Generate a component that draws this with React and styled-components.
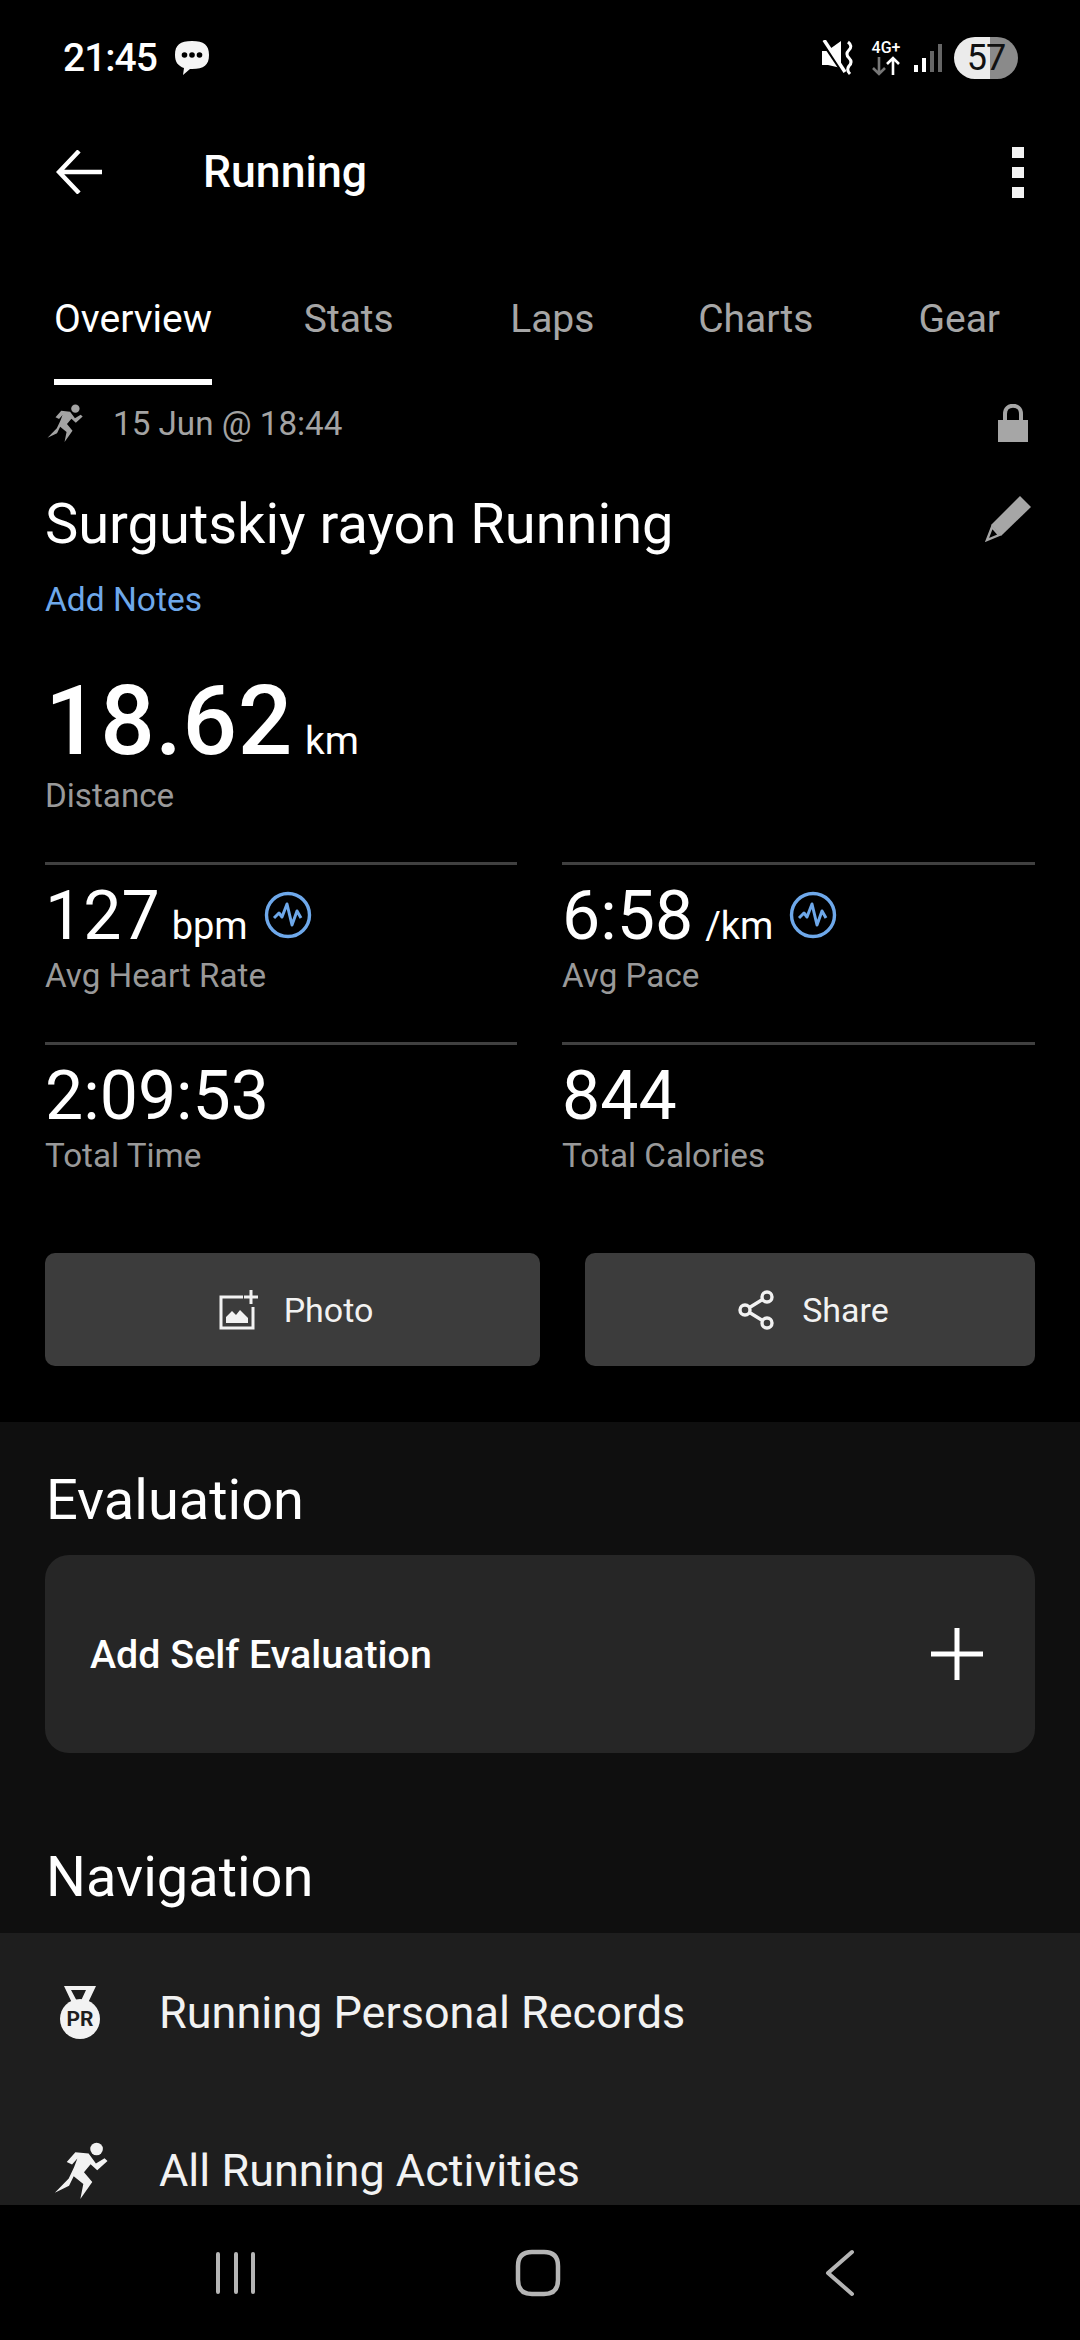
import React from 'react';
import styled, { createGlobalStyle } from 'styled-components';

const GlobalStyle = createGlobalStyle`
  html, body {
    margin: 0;
    padding: 0;
    background: #000;
  }
  * {
    box-sizing: border-box;
  }
`;

const Screen = styled.div`
  width: 1080px;
  height: 2340px;
  display: flex;
  flex-direction: column;
  background: #000;
  color: #fff;
  font-family: Roboto, "Noto Sans", sans-serif;
  overflow: hidden;
`;

const Content = styled.main`
  flex: 1;
  min-height: 0;
  overflow: hidden;
`;

const StatusBar = styled.div`
  height: 116px;
  padding: 0 62px 0 63px;
  display: flex;
  align-items: center;
  justify-content: space-between;
`;

const StatusGroup = styled.div`
  display: flex;
  align-items: center;
  gap: ${(p) => p.$gap || 0}px;
`;

const Clock = styled.span`
  font-size: 39px;
  font-weight: 500;
  letter-spacing: -1px;
`;

const NetworkBlock = styled.div`
  width: 36px;
  display: flex;
  flex-direction: column;
  align-items: center;
  font-size: 16px;
  font-weight: 500;
  line-height: 16px;
`;

const Battery = styled.div`
  width: 64px;
  height: 42px;
  border-radius: 21px;
  background: linear-gradient(90deg, #ebebeb 57%, #8a8a8a 57%);
  color: #111;
  font-size: 36px;
  line-height: 42px;
  letter-spacing: -1px;
  text-align: center;
`;

const AppBar = styled.header`
  height: 112px;
  padding: 0 56px;
  display: flex;
  align-items: center;
`;

const AppTitle = styled.h1`
  margin: 0 0 0 101px;
  flex: 1;
  font-size: 44.6px;
  font-weight: 500;
`;

const Kebab = styled.div`
  display: flex;
  flex-direction: column;
  gap: 9px;

  span {
    width: 12px;
    height: 11px;
    background: #f2f2f2;
  }
`;

const Tabs = styled.nav`
  height: 157px;
  padding-left: 54px;
  display: flex;
`;

const Tab = styled.div`
  width: ${(p) => (p.$active ? '158px' : '203.5px')};
  margin-right: ${(p) => (p.$active ? '35px' : '0')};
  padding-top: 68px;
  text-align: center;
  font-size: 39px;
  line-height: 46px;
  white-space: nowrap;
  color: ${(p) => (p.$active ? '#fff' : '#a6a6a6')};
  border-bottom: 6px solid ${(p) => (p.$active ? '#fff' : 'transparent')};
`;

const Summary = styled.section`
  padding: 0 45px;
  height: 1037px;
`;

const MetaRow = styled.div`
  height: 76px;
  padding-right: 7px;
  display: flex;
  align-items: center;
  color: #a3a3a3;
  font-size: 33.2px;

  span {
    margin-left: 28px;
    flex: 1;
  }
`;

const TitleRow = styled.div`
  margin-top: 29px;
  display: flex;
  justify-content: space-between;
  align-items: flex-start;
`;

const Title = styled.h2`
  margin: 0;
  font-size: 56px;
  font-weight: 400;
  line-height: 68px;
`;

const PencilIcon = styled.svg`
  margin: 6px 4px 0 0;
`;

const AddNotes = styled.div`
  margin-top: 22px;
  font-size: 33.5px;
  line-height: 40px;
  color: #6ea8ea;
`;

const DistanceValue = styled.div`
  margin-top: 51px;
  display: flex;
  align-items: baseline;
  height: 100px;
  line-height: 100px;

  strong {
    font-size: 96px;
    font-weight: 500;
    letter-spacing: 0.6px;
  }

  span {
    margin-left: 12px;
    font-size: 39px;
  }
`;

const CaptionLabel = styled.div`
  font-size: 33.2px;
  line-height: 40px;
  color: #999;
`;

const DistanceCaption = styled(CaptionLabel)`
  margin-top: 5px;
`;

const StatGrid = styled.div`
  margin-top: 46px;
  display: grid;
  grid-template-columns: 472px 473px;
  grid-auto-rows: 180px;
  column-gap: 45px;
`;

const StatCell = styled.div`
  border-top: 3px solid #404040;
  padding-top: 13px;
`;

const StatValue = styled.div`
  height: 78px;
  display: flex;
  align-items: baseline;
  line-height: 76px;

  strong {
    font-size: 68px;
    font-weight: 400;
  }

  span {
    margin-left: 12px;
    font-size: 38px;
  }
`;

const PulseIcon = styled.svg`
  align-self: flex-start;
  margin: 13px 0 0 16px;
`;

const ButtonRow = styled.div`
  margin-top: 31px;
  display: flex;
  gap: 45px;
`;

const ActionButton = styled.button`
  width: ${(p) => p.$width}px;
  height: 113px;
  padding: 0 0 0 7px;
  display: flex;
  align-items: center;
  justify-content: center;
  gap: ${(p) => p.$gap}px;
  border: 0;
  border-radius: 10px;
  background: #3c3c3c;
  color: #f2f2f2;
  font-family: inherit;
  font-size: 34px;
`;

const Lower = styled.section`
  background: #0f0f0f;
`;

const SectionTitle = styled.h3`
  margin: 0;
  padding: ${(p) => p.$top}px 46px 0;
  font-size: 56px;
  font-weight: 400;
  line-height: 64px;
`;

const EvalCard = styled.div`
  margin: 23px 45px 0;
  height: 198px;
  padding: 0 52px 0 45px;
  display: flex;
  align-items: center;
  justify-content: space-between;
  border-radius: 24px;
  background: #262626;
  font-size: 39.4px;
  font-weight: 500;
`;

const NavList = styled.div`
  margin-top: 24px;
  background: #1e1e1e;
  height: 272px;
`;

const NavItem = styled.div`
  height: 158px;
  display: flex;
  align-items: center;
  gap: ${(p) => p.$gap}px;
  padding-left: ${(p) => p.$left}px;
  font-size: 45px;
  color: #f2f2f2;
`;

const BottomNav = styled.footer`
  height: 135px;
  flex: none;
  background: #000;
  padding: 0 4px 0 0;
  display: grid;
  grid-template-columns: repeat(3, 302px);
  justify-content: center;
  align-items: center;
  justify-items: center;
`;

const RunnerIcon = ({ size, color }) => (
  <svg width={size} height={size * 0.95} viewBox="160 725 162 172" fill={color}>
    <circle cx="288" cy="746" r="19" />
    <path d="M198 785 L224 756 L264 760 L286 790 L312 774 L321 782 L290 810 L270 792 L250 816 L275 846 L239 897 L248 852 L219 828 L205 857 L162 878 L204 835 L220 801 L230 775 L214 793 Z" />
  </svg>
);

const Pulse = () => (
  <PulseIcon width="48" height="48" viewBox="0 0 48 48" fill="none" stroke="#6ea8ea">
    <circle cx="24" cy="24" r="21.5" strokeWidth="3.4" />
    <path d="M10 27 L15 22 L18 26 L23 13 L28 34 L33 20 L37 27" strokeWidth="3" strokeLinejoin="round" />
  </PulseIcon>
);

const Stat = ({ value, unit, label, pulse }) => (
  <StatCell>
    <StatValue>
      <strong>{value}</strong>
      {unit && <span>{unit}</span>}
      {pulse && <Pulse />}
    </StatValue>
    <CaptionLabel>{label}</CaptionLabel>
  </StatCell>
);

export default function App() {
  return (
    <Screen>
      <GlobalStyle />
      <Content>
        <StatusBar>
          <StatusGroup $gap={17}>
            <Clock>21:45</Clock>
            <svg width="36" height="36" viewBox="0 0 36 36" fill="#f5f5f5">
              <path d="M18 1 C30 1 35 5 35 15 C35 25 30 29 18 29 H16 L9 35 L10 28 C4 26 1 22 1 15 C1 5 6 1 18 1 Z" />
              <circle cx="10.5" cy="15" r="2.8" fill="#000" />
              <circle cx="18" cy="15" r="2.8" fill="#000" />
              <circle cx="25.5" cy="15" r="2.8" fill="#000" />
            </svg>
          </StatusGroup>
          <StatusGroup>
            <svg width="34" height="36" viewBox="0 0 34 36" fill="#fff" style={{ marginRight: 13 }}>
              <path d="M1 11 H6 L20 1 V28 L7 25 H1 Z" />
              <path d="M0 0 L22 33" stroke="#000" strokeWidth="3" />
              <path d="M3 0 L24 32" stroke="#fff" strokeWidth="3.5" />
              <path d="M27 2 Q32 6 28 10 Q24 14 28 18 Q32 22 28 26 Q25 30 29 34" fill="none" stroke="#fff" strokeWidth="3" />
            </svg>
            <NetworkBlock>
              4G+
              <svg width="32" height="20" viewBox="0 0 32 20" fill="none" strokeWidth="2.6">
                <path d="M9 1 V18 M3 12 L9 18 L15 12" stroke="#777" />
                <path d="M23 19 V2 M17 8 L23 2 L29 8" stroke="#fff" />
              </svg>
            </NetworkBlock>
            <svg width="30" height="30" viewBox="0 0 30 30" style={{ margin: '0 11px 0 9px' }}>
              <rect x="1" y="22" width="4" height="7" fill="#fff" />
              <rect x="9" y="15" width="4" height="14" fill="#fff" />
              <rect x="17" y="8" width="4" height="21" fill="#666" />
              <rect x="25" y="1" width="4" height="28" fill="#666" />
            </svg>
            <Battery>57</Battery>
          </StatusGroup>
        </StatusBar>

        <AppBar>
          <svg width="46" height="44" viewBox="0 0 46 44" fill="none" stroke="#fff" strokeWidth="4.5">
            <path d="M46 22 H3 M23 1 L3 22 L23 43" />
          </svg>
          <AppTitle>Running</AppTitle>
          <Kebab>
            <span />
            <span />
            <span />
          </Kebab>
        </AppBar>

        <Tabs>
          <Tab $active>Overview</Tab>
          <Tab>Stats</Tab>
          <Tab>Laps</Tab>
          <Tab>Charts</Tab>
          <Tab>Gear</Tab>
        </Tabs>

        <Summary>
          <MetaRow>
            <RunnerIcon size={40} color="#a3a3a3" />
            <span>15 Jun @ 18:44</span>
            <svg width="30" height="38" viewBox="0 0 30 38" fill="none">
              <path d="M7 18 V10 C7 -1 23 -1 23 10 V18" stroke="#a6a6a6" strokeWidth="4" />
              <rect x="0" y="16" width="30" height="22" fill="#a6a6a6" />
            </svg>
          </MetaRow>
          <TitleRow>
            <Title>Surgutskiy rayon Running</Title>
            <PencilIcon width="46" height="46" viewBox="0 0 46 46">
              <path d="M35 0 L46 11 L16 40 L6 29 Z" fill="#a6a6a6" />
              <path d="M7 31 L14 39 L2 44 Z" fill="none" stroke="#a6a6a6" strokeWidth="2.4" />
            </PencilIcon>
          </TitleRow>
          <AddNotes>Add Notes</AddNotes>
          <DistanceValue>
            <strong>18.62</strong>
            <span>km</span>
          </DistanceValue>
          <DistanceCaption>Distance</DistanceCaption>
          <StatGrid>
            <Stat value="127" unit="bpm" label="Avg Heart Rate" pulse />
            <Stat value="6:58" unit="/km" label="Avg Pace" pulse />
            <Stat value="2:09:53" label="Total Time" />
            <Stat value="844" label="Total Calories" />
          </StatGrid>
          <ButtonRow>
            <ActionButton $width={495} $gap={25}>
              <svg width="40" height="40" viewBox="0 0 40 40" fill="none" stroke="#f2f2f2" strokeWidth="3">
                <path d="M24 7 H2 V38 H34 V17" />
                <path d="M32 0 V14 M25 7 H39" />
                <path d="M7 33 V27 L13 21 L17 25 L21 20 L29 28 V33 Z" fill="#f2f2f2" stroke="none" />
              </svg>
              Photo
            </ActionButton>
            <ActionButton $width={450} $gap={28}>
              <svg width="36" height="40" viewBox="0 0 36 40" fill="none" stroke="#f2f2f2" strokeWidth="3.4">
                <circle cx="29" cy="7" r="5" />
                <circle cx="7" cy="20" r="5" />
                <circle cx="29" cy="33" r="5" />
                <path d="M11.5 17.5 L24.5 9.5 M11.5 22.5 L24.5 30.5" />
              </svg>
              Share
            </ActionButton>
          </ButtonRow>
        </Summary>

        <Lower>
          <SectionTitle $top={46}>Evaluation</SectionTitle>
          <EvalCard>
            Add Self Evaluation
            <svg width="52" height="52" viewBox="0 0 52 52" stroke="#fff" strokeWidth="5">
              <path d="M26 0 V52 M0 26 H52" />
            </svg>
          </EvalCard>
          <SectionTitle $top={92}>Navigation</SectionTitle>
          <NavList>
            <NavItem $left={60} $gap={59}>
              <svg width="40" height="54" viewBox="0 0 40 54">
                <path d="M4 1 H36 L27 20 H13 Z M11 5 L19 20 L26 5 Z" fill="#f2f2f2" fillRule="evenodd" />
                <circle cx="20" cy="34" r="20" fill="#f2f2f2" />
                <text x="20" y="41" textAnchor="middle" fontFamily="Roboto, sans-serif" fontWeight="700" fontSize="21" fill="#1e1e1e">PR</text>
              </svg>
              Running Personal Records
            </NavItem>
            <NavItem $left={51} $gap={48}>
              <RunnerIcon size={60} color="#f2f2f2" />
              All Running Activities
            </NavItem>
          </NavList>
        </Lower>
      </Content>

      <BottomNav>
        <svg width="44" height="44" viewBox="0 0 44 44" stroke="#b5b5b5" strokeWidth="4" strokeLinecap="round">
          <path d="M4 3 V41 M22 3 V41 M39 3 V41" />
        </svg>
        <svg width="46" height="48" viewBox="0 0 46 48" fill="none" stroke="#b5b5b5" strokeWidth="4.5">
          <path d="M17 3 H29 Q43 3 43 17 V31 Q43 45 29 45 H17 Q3 45 3 31 V17 Q3 3 17 3 Z" />
        </svg>
        <svg width="32" height="48" viewBox="0 0 32 48" fill="none" stroke="#b5b5b5" strokeWidth="4" strokeLinecap="round" strokeLinejoin="round">
          <path d="M28 3 L4 24 L28 45" />
        </svg>
      </BottomNav>
    </Screen>
  );
}
